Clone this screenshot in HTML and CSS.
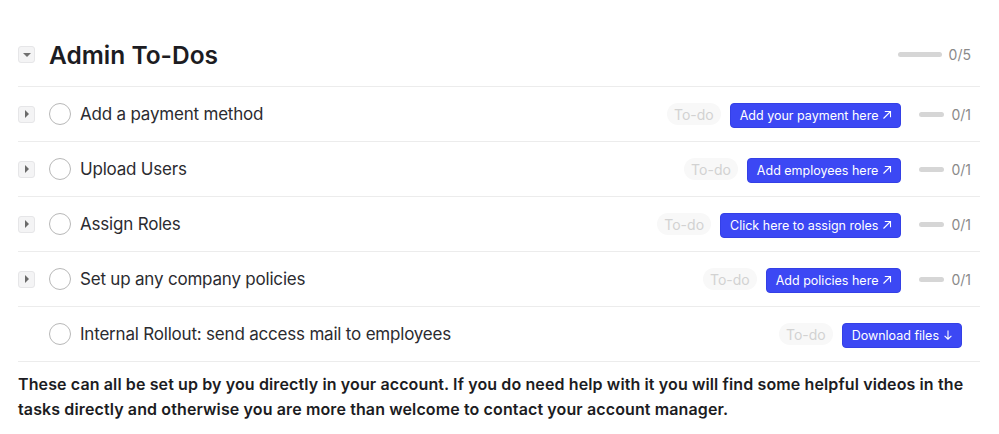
FILE: index.html
```html
<!DOCTYPE html>
<html lang="en">
<head>
<meta charset="utf-8">
<title>Admin To-Dos</title>
<link rel="stylesheet" href="styles.css">
</head>
<body>
<div class="page">
  <div class="header">
    <div class="toggle"><span class="tri-down"></span></div>
    <h1 class="title">Admin To-Dos</h1>
    <div class="progress">
      <span class="bar bar-wide"></span>
      <span class="count">0/5</span>
    </div>
  </div>

  <div class="row">
    <div class="toggle"><span class="tri-right"></span></div>
    <span class="check"></span>
    <span class="label">Add a payment method</span>
    <div class="right">
      <span class="tag">To-do</span>
      <a class="btn">Add your payment here <svg class="ico" viewBox="0 0 10 10"><path d="M1.5 8.5 L8.5 1.5 M2.8 1.5 H8.5 V7.2" fill="none" stroke="#fff" stroke-width="1.1"/></svg></a>
      <span class="bar"></span>
      <span class="count">0/1</span>
    </div>
  </div>

  <div class="row">
    <div class="toggle"><span class="tri-right"></span></div>
    <span class="check"></span>
    <span class="label">Upload Users</span>
    <div class="right">
      <span class="tag">To-do</span>
      <a class="btn">Add employees here <svg class="ico" viewBox="0 0 10 10"><path d="M1.5 8.5 L8.5 1.5 M2.8 1.5 H8.5 V7.2" fill="none" stroke="#fff" stroke-width="1.1"/></svg></a>
      <span class="bar"></span>
      <span class="count">0/1</span>
    </div>
  </div>

  <div class="row">
    <div class="toggle"><span class="tri-right"></span></div>
    <span class="check"></span>
    <span class="label">Assign Roles</span>
    <div class="right">
      <span class="tag">To-do</span>
      <a class="btn">Click here to assign roles <svg class="ico" viewBox="0 0 10 10"><path d="M1.5 8.5 L8.5 1.5 M2.8 1.5 H8.5 V7.2" fill="none" stroke="#fff" stroke-width="1.1"/></svg></a>
      <span class="bar"></span>
      <span class="count">0/1</span>
    </div>
  </div>

  <div class="row">
    <div class="toggle"><span class="tri-right"></span></div>
    <span class="check"></span>
    <span class="label">Set up any company policies</span>
    <div class="right">
      <span class="tag">To-do</span>
      <a class="btn">Add policies here <svg class="ico" viewBox="0 0 10 10"><path d="M1.5 8.5 L8.5 1.5 M2.8 1.5 H8.5 V7.2" fill="none" stroke="#fff" stroke-width="1.1"/></svg></a>
      <span class="bar"></span>
      <span class="count">0/1</span>
    </div>
  </div>

  <div class="row">
    <div class="toggle toggle-empty"></div>
    <span class="check"></span>
    <span class="label">Internal Rollout: send access mail to employees</span>
    <div class="right right-end">
      <span class="tag">To-do</span>
      <a class="btn">Download files <svg class="ico" viewBox="0 0 10 10"><path d="M5 0.5 V9.2 M1.6 5.8 L5 9.2 L8.4 5.8" fill="none" stroke="#fff" stroke-width="1.1"/></svg></a>
    </div>
  </div>

  <p class="note">These can all be set up by you directly in your account. If you do need help with it you will find some helpful videos in the tasks directly and otherwise you are more than welcome to contact your account manager.</p>
</div>
</body>
</html>
```

FILE: styles.css
```css
* { box-sizing: border-box; }
html, body { margin: 0; padding: 0; background: #fff; }
body {
  font-family: Inter, "Noto Sans", "Liberation Sans", sans-serif;
  color: #222;
}
.page {
  width: 962px;
  margin-left: 18px;
}
.header {
  display: flex;
  align-items: center;
  height: 87px;
  padding: 38px 0 15px;
  border-bottom: 1px solid #ececec;
}
.title {
  margin: 0 0 0 14px;
  font-size: 24.5px;
  font-weight: 600;
  color: #1c1c22;
  flex: 1;
}
.toggle {
  width: 17px;
  height: 17px;
  border-radius: 3px;
  background: #f4f4f5;
  border: 1px solid #e6e6e8;
  display: flex;
  align-items: center;
  justify-content: center;
  flex: none;
}
.toggle-empty { visibility: hidden; }
.tri-down {
  width: 0; height: 0;
  border-left: 4px solid transparent;
  border-right: 4px solid transparent;
  border-top: 4px solid #707070;
  margin-top: 1px;
}
.tri-right {
  width: 0; height: 0;
  border-top: 4px solid transparent;
  border-bottom: 4px solid transparent;
  border-left: 4px solid #6a6a6a;
  margin-left: 1px;
}
.progress {
  display: flex;
  align-items: center;
  padding-right: 9px;
}
.bar {
  display: inline-block;
  width: 25px;
  height: 5px;
  border-radius: 3px;
  background: #d6d6d6;
  margin-left: 18px;
}
.bar-wide { width: 44px; margin-left: 0; }
.count {
  font-size: 14px;
  color: #8a8a8a;
  margin-left: 7px;
}
.row {
  display: flex;
  align-items: center;
  height: 55px;
  border-bottom: 1px solid #ececec;
}
.check {
  width: 22px;
  height: 22px;
  border-radius: 50%;
  border: 1.5px solid #b8b8b8;
  margin-left: 14px;
  flex: none;
}
.label {
  margin-left: 9px;
  font-size: 17px;
  letter-spacing: -0.2px;
  color: #2b2b30;
  flex: 1;
}
.right {
  display: flex;
  align-items: center;
  padding-right: 9px;
}
.right-end { padding-right: 18px; }
.tag {
  height: 22px;
  padding: 0 7px;
  border-radius: 11px;
  background: #f8f8f8;
  color: #d2d2d2;
  font-size: 14px;
  display: flex;
  align-items: center;
  margin-right: 9px;
}
.btn {
  height: 25px;
  margin-top: 2px;
  padding: 0 8px 0 9px;
  border-radius: 4px;
  background: #3c48f4;
  border: 1px solid #3440e6;
  color: #fff;
  font-size: 12.5px;
  display: flex;
  align-items: center;
  gap: 4px;
}
.ico { width: 10px; height: 10px; }
.note {
  margin: 10px 0 0;
  font-size: 16px;
  font-weight: 600;
  letter-spacing: 0.12px;
  line-height: 25px;
  color: #1c1c22;
}
```
